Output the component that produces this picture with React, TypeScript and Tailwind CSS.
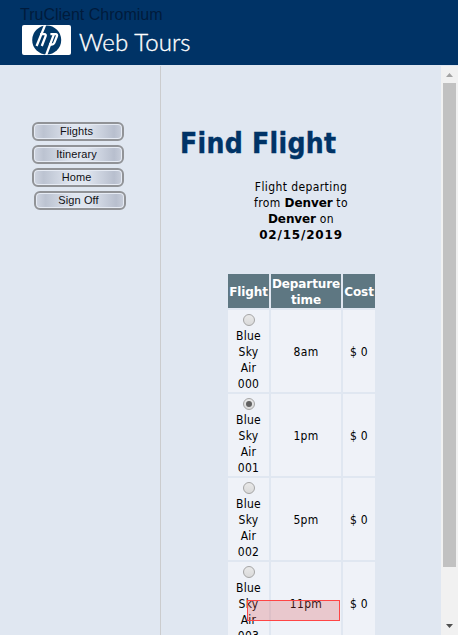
const TAHOMA = "font-['DejaVu_Sans_Condensed','DejaVu_Sans',sans-serif] [font-stretch:condensed]";
const WIDE_BOLD = "font-['DejaVu_Sans','Liberation_Sans',sans-serif] [font-stretch:normal] font-bold tracking-[-0.1px]";

const flights = [
  { code: '000', time: '8am', cost: '$ 0' },
  { code: '001', time: '1pm', cost: '$ 0', selected: true },
  { code: '002', time: '5pm', cost: '$ 0' },
  { code: '003', time: '11pm', cost: '$ 0' },
];

function Radio({ checked }: { checked?: boolean }) {
  return (
    <span className="mt-1 flex h-3 w-3 shrink-0 items-center justify-center rounded-full border border-[#a5a5a5] bg-linear-to-b from-[#e9e9e9] to-[#dadada]">
      {checked && <span className="h-1.5 w-1.5 rounded-full bg-[#606060]" />}
    </span>
  );
}

function NavButton({ label, shifted }: { label: string; shifted?: boolean }) {
  return (
    <div
      className={`${shifted ? 'ml-[34px]' : 'ml-8'} h-[19px] w-[92px] rounded-[6px] border-2 border-[#919397] bg-[#e6ebf4] p-px`}
    >
      <div className="flex h-full items-center justify-center rounded-[3px] bg-[linear-gradient(90deg,#cdd3df_0%,#bcc3d1_10%,#dfe5ef_42%,#dfe5ef_60%,#b8bfce_92%,#c6ccd9_100%)] pr-[3px] font-['Liberation_Sans',sans-serif] text-[11px] leading-[13px] tracking-[0.1px] text-[#101014]">
        {label}
      </div>
    </div>
  );
}

function HpLogo() {
  return (
    <svg width="49" height="30" viewBox="0 0 49 30">
      <rect width="49" height="30" rx="2" fill="#fff" />
      <circle cx="24.7" cy="15" r="14.5" fill="#003868" />
      <g fill="none" stroke="#fff" strokeWidth="2.3">
        <path d="M23.5 -1L14.6 21" />
        <path d="M18.2 9.2h4.2c1.3 0 1.6.8 1.2 1.9L19.8 21" />
        <path d="M23.8 31L32 9.2" />
        <path d="M28.4 9.2h5.2c1.4 0 1.8.8 1.3 2l-2.6 6.6c-.5 1.2-1.1 1.7-2.5 1.7h-2.8" />
      </g>
    </svg>
  );
}

function Header() {
  return (
    <header className="relative h-[65px] shrink-0 bg-[#003366]">
      <div className="flex h-full items-start pl-[22px] pt-[25px]">
        <HpLogo />
        <span className="ml-[8px] mt-[3px] whitespace-nowrap font-['Lato',sans-serif] text-[24px] font-light leading-7 tracking-[0.1px] text-white [-webkit-text-stroke:0.35px_white]">
          Web Tours
        </span>
      </div>
      <span className="absolute left-5 top-[5px] whitespace-nowrap font-['Liberation_Sans',sans-serif] text-[16px] leading-5 text-[#001b3c]">
        TruClient Chromium
      </span>
    </header>
  );
}

function Th({ children }: { children: React.ReactNode }) {
  return (
    <div className={`flex items-center justify-center whitespace-nowrap bg-[#5e7782] pt-0.5 text-center text-white ${WIDE_BOLD}`}>
      <div>{children}</div>
    </div>
  );
}

export default function App() {
  return (
    <div className={`flex h-[635px] w-[458px] flex-col overflow-hidden bg-[#e0e7f1] text-[12px] leading-4 text-black ${TAHOMA}`}>
      <Header />
      <div className="flex min-h-0 flex-1 pt-px">
        <nav className="flex w-[161px] shrink-0 flex-col gap-1 border-r border-[#cbccce] pt-14">
          <NavButton label="Flights" />
          <NavButton label="Itinerary" />
          <NavButton label="Home" />
          <NavButton label="Sign Off" shifted />
        </nav>
        <main className="min-w-0 flex-1 overflow-hidden">
          <h1 className="ml-[19px] mt-[61px] whitespace-nowrap text-[28px] font-bold leading-[34px] tracking-[0.3px] text-[#003366] [-webkit-text-stroke:0.4px_#003366]">
            Find Flight
          </h1>
          <p className="ml-[67px] mt-[18px] w-[146px] whitespace-nowrap text-center tracking-[0.4px]">
            Flight departing
            <br />
            from <b className={WIDE_BOLD}>Denver</b> to
            <br />
            <b className={WIDE_BOLD}>Denver</b> on
            <br />
            <b className="font-['DejaVu_Sans',sans-serif] font-bold tracking-[0.8px] [font-stretch:normal]">02/15/2019</b>
          </p>
          <div className="ml-[67px] mt-[31px] grid w-[147px] grid-cols-[41px_70px_32px] grid-rows-[34px] gap-0.5 tracking-[0.3px]">
            <Th>Flight</Th>
            <Th>
              Departure
              <br />
              time
            </Th>
            <Th>Cost</Th>
            {flights.map((f) => (
              <div key={f.code} className="col-span-3 grid h-[82px] grid-cols-subgrid">
                <div className="flex flex-col items-center bg-[#eff2f8] text-center">
                  <Radio checked={f.selected} />
                  <div className="mt-0.5">
                    Blue
                    <br />
                    Sky
                    <br />
                    Air
                    <br />
                    {f.code}
                  </div>
                </div>
                <div className="flex items-center justify-center bg-[#eff2f8] pt-0.5">{f.time}</div>
                <div className="flex items-center justify-center bg-[#eff2f8] pt-0.5">{f.cost}</div>
              </div>
            ))}
          </div>
        </main>
        <aside className="flex w-[17px] shrink-0 flex-col items-center bg-[#f1f1f1]">
          <svg width="17" height="17" viewBox="0 0 17 17">
            <path d="M5 11L8.5 7L12 11z" fill="#a3a3a3" />
          </svg>
          <div className="h-[484px] w-[13px] bg-[#c1c1c1]" />
          <svg className="mt-auto" width="17" height="17" viewBox="0 0 17 17">
            <path d="M5 6L8.5 10L12 6z" fill="#505050" />
          </svg>
        </aside>
      </div>
      <div className="absolute left-[247px] top-[600px] h-[21px] w-[93px] border-[1.5px] border-[#ff4545] bg-[#d94c4c]/25" />
    </div>
  );
}
